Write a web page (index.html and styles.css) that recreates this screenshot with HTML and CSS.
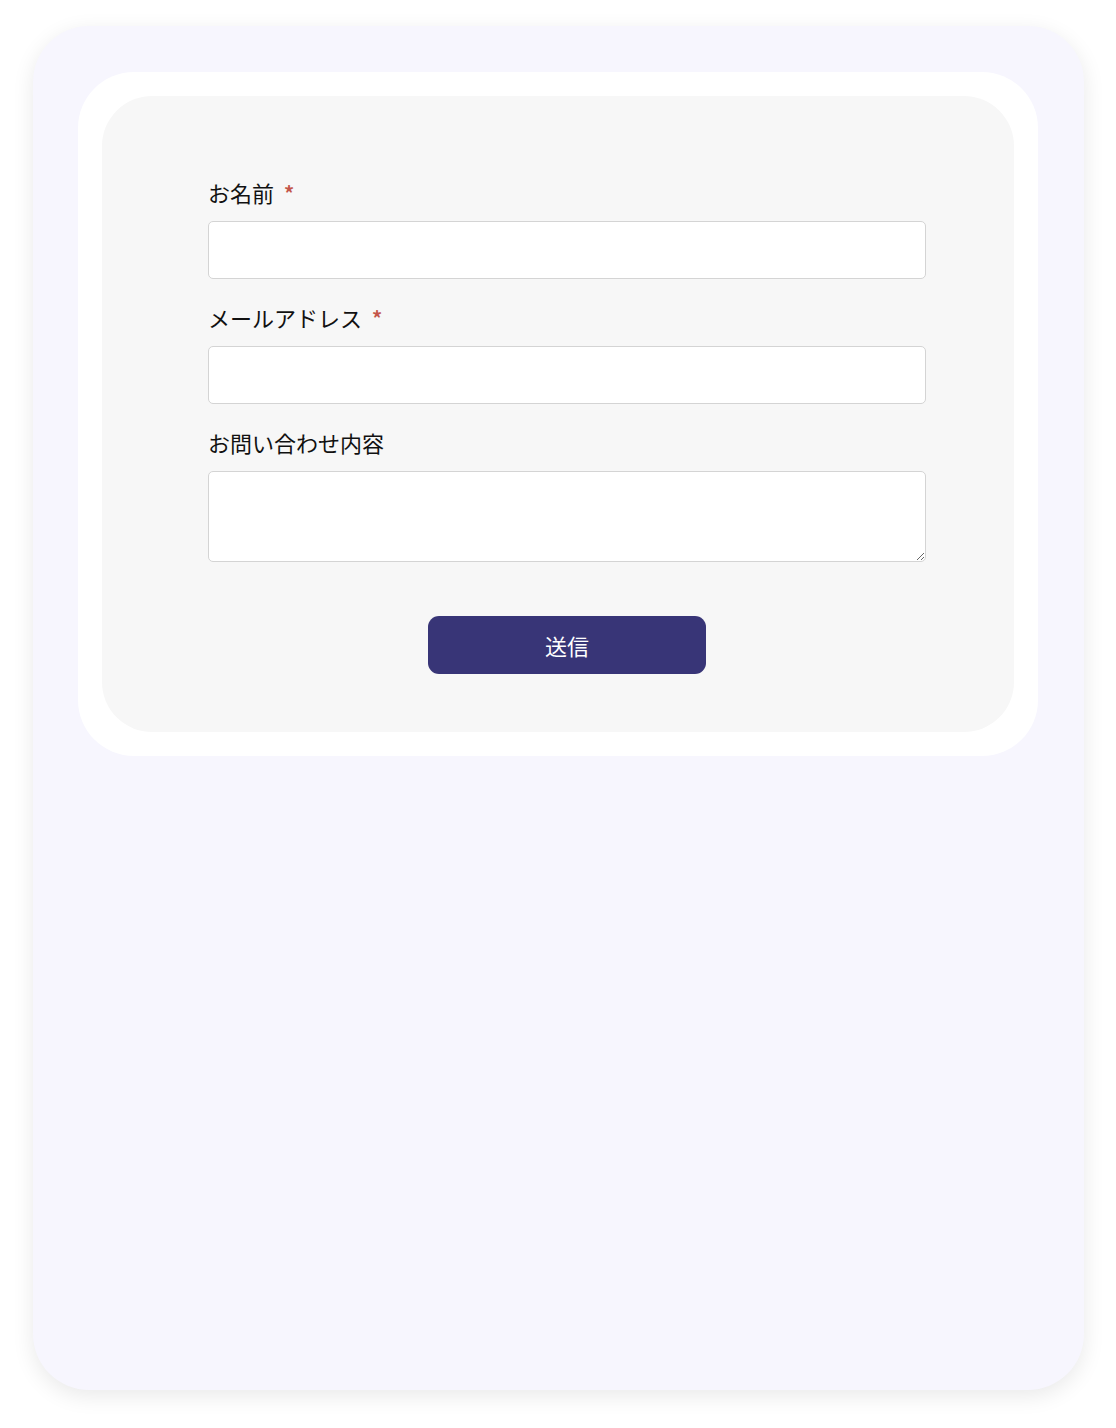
FILE: index.html
```html
<!DOCTYPE html>
<html lang="ja">
<head>
    <meta charset="utf-8">
    <title>お問い合わせ</title>
    <link rel="stylesheet" href="styles.css">
</head>
<body>
    <div class="page">
        <div class="frame">
            <div class="panel">
                <form class="contact-form">
                    <label class="field-label" for="name">お名前<span class="required">*</span></label>
                    <input class="field-input" type="text" id="name" name="name" required>

                    <label class="field-label" for="email">メールアドレス<span class="required">*</span></label>
                    <input class="field-input" type="email" id="email" name="email" required>

                    <label class="field-label" for="message">お問い合わせ内容</label>
                    <textarea class="field-textarea" id="message" name="message"></textarea>

                    <div class="actions">
                        <button type="submit" class="submit-btn">送信</button>
                    </div>
                </form>
            </div>
        </div>
    </div>
</body>
</html>
```

FILE: styles.css
```css
html, body {
    margin: 0;
    padding: 0;
    background-color: #ffffff;
}
body {
    font-family: "Noto Sans CJK JP", "Noto Sans", sans-serif;
    color: #111;
    padding: 26px 32px 38px 33px;
}
.page {
    height: 1364px;
    box-sizing: border-box;
    background-color: #f7f6fe;
    border-radius: 56px;
    box-shadow: 0 6px 22px rgba(0, 0, 0, 0.09);
    padding: 46px 46px 0 45px;
}
.frame {
    background-color: #ffffff;
    border-radius: 56px;
    padding: 24px;
}
.panel {
    background-color: #f7f7f7;
    border-radius: 50px;
    padding: 80px 88px 58px 106px;
}
.contact-form {
    display: flex;
    flex-direction: column;
}
.field-label {
    font-size: 22px;
    line-height: 33px;
    margin-bottom: 12px;
}
.required {
    color: #c4564a;
    font-size: 20px;
    font-weight: bold;
    margin-left: 10px;
    vertical-align: top;
}
.field-input,
.field-textarea {
    box-sizing: border-box;
    width: 100%;
    border: 1px solid #d4d4d4;
    border-radius: 5px;
    background: #ffffff;
    font-size: 18px;
    font-family: inherit;
    padding: 8px 12px;
    margin: 0 0 22px 0;
}
.field-input {
    height: 58px;
}
.field-textarea {
    height: 91px;
    margin-bottom: 0;
    resize: vertical;
}
.actions {
    display: flex;
    justify-content: center;
    margin-top: 54px;
}
.submit-btn {
    width: 278px;
    height: 58px;
    border: none;
    border-radius: 11px;
    background-color: #383577;
    color: #ffffff;
    font-family: inherit;
    font-size: 22px;
    cursor: pointer;
}
```
